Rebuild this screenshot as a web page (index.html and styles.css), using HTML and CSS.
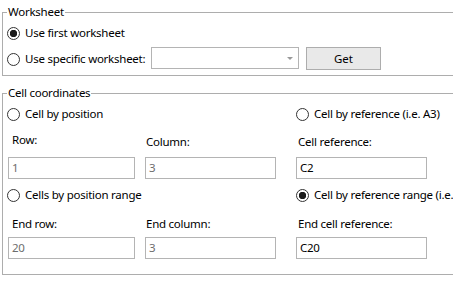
FILE: index.html
```html
<!DOCTYPE html>
<html>
  <head>
    <title>Cell range settings</title>
    <link rel="stylesheet" href="styles.css">
  </head>
  <body>
    <fieldset class="group worksheet">
      <legend>Worksheet</legend>
      <div class="radio-row first">
        <span class="radio checked"></span>
        <span class="radio-text">Use first worksheet</span>
      </div>
      <div class="radio-row specific">
        <span class="radio"></span>
        <span class="radio-text">Use specific worksheet:</span>
        <div class="combo"><span class="arrow"></span></div>
        <button class="button">Get</button>
      </div>
    </fieldset>
    <fieldset class="group coords">
      <legend>Cell coordinates</legend>
      <div class="grid options">
        <div class="radio-row"><span class="radio"></span><span class="radio-text">Cell by position</span></div>
        <div></div>
        <div class="radio-row"><span class="radio"></span><span class="radio-text">Cell by reference (i.e. A3)</span></div>
      </div>
      <div class="grid labels">
        <label class="label">Row:</label>
        <label class="label low">Column:</label>
        <label class="label low">Cell reference:</label>
      </div>
      <div class="grid inputs">
        <div class="input disabled">1</div>
        <div class="input disabled">3</div>
        <div class="input">C2</div>
      </div>
      <div class="grid options second">
        <div class="radio-row"><span class="radio"></span><span class="radio-text">Cells by position range</span></div>
        <div></div>
        <div class="radio-row"><span class="radio checked"></span><span class="radio-text">Cell by reference range (i.e.</span></div>
      </div>
      <div class="grid labels second">
        <label class="label">End row:</label>
        <label class="label">End column:</label>
        <label class="label">End cell reference:</label>
      </div>
      <div class="grid inputs second">
        <div class="input disabled">20</div>
        <div class="input disabled">3</div>
        <div class="input">C20</div>
      </div>
    </fieldset>
  </body>
</html>
```

FILE: styles.css
```css
* {
  box-sizing: border-box;
}
body {
  margin: 0;
  width: 453px;
  height: 299px;
  overflow: hidden;
  background: #fff;
  color: #000;
  font-family: 'Noto Sans', 'Open Sans', sans-serif;
  font-size: 11.5px;
  letter-spacing: -0.25px;
  line-height: 16px;
}
.group {
  width: 470px;
  margin: 4px 0 0 2px;
  padding: 0 0 0 4px;
  border: 1px solid #adadad;
  border-right: none;
  min-width: 0;
}
.group legend {
  padding: 0 1px;
  margin-left: 0;
  line-height: 16px;
  height: 16px;
}
.worksheet {
  padding-top: 3px;
  padding-bottom: 4px;
}
.coords {
  margin-top: 9px;
  padding-top: 3px;
  padding-bottom: 15px;
}
.radio-row {
  display: flex;
  align-items: center;
  height: 20px;
  white-space: nowrap;
}
.radio {
  width: 13px;
  height: 13px;
  border: 1px solid #333;
  border-radius: 50%;
  flex: none;
  margin-right: 5px;
}
.radio.checked {
  background: radial-gradient(circle, #1a1a1a 0, #1a1a1a 3.4px, transparent 4px);
}
.specific {
  height: 24px;
  margin-top: 4px;
}
.specific .radio-text {
  width: 126px;
}
.combo {
  width: 148px;
  height: 22px;
  border: 1px solid #b4b4b4;
  position: relative;
  margin-top: -2px;
}
.combo .arrow {
  position: absolute;
  right: 5px;
  top: 9px;
  border-left: 3px solid transparent;
  border-right: 3px solid transparent;
  border-top: 3px solid #999;
}
.button {
  width: 75px;
  height: 23px;
  margin-left: 7px;
  border: 1px solid #adadad;
  background: #e9e9e9;
  font: inherit;
  letter-spacing: 0;
  color: #000;
  padding: 0;
  margin-top: -1px;
}
.grid {
  display: grid;
  grid-template-columns: 137px 151px 1fr;
  padding-left: 1px;
}
.grid.options {
  padding-left: 0;
}
.grid.options > div:last-child {
  margin-left: 1px;
}
.labels {
  margin-top: 8px;
  height: 16px;
}
.labels.second {
  margin-top: 11px;
}
.label {
  padding-left: 4px;
}
.labels .label:nth-child(2) {
  padding-left: 1px;
}
.labels .label:nth-child(3) {
  padding-left: 2px;
}
.label.low {
  position: relative;
  top: 2px;
}
.inputs {
  margin-top: 9px;
}
.inputs.second {
  margin-top: 5px;
}
.options.second {
  margin-top: 6px;
}
.input {
  height: 22px;
  border: 1px solid #b4b4b4;
  padding: 2px 0 0 3px;
  color: #000;
}
.inputs .input:nth-child(1) {
  width: 127px;
}
.inputs .input:nth-child(2) {
  width: 131px;
}
.inputs .input:nth-child(3) {
  width: 131px;
}
.input.disabled {
  color: #6d6d6d;
}
```
